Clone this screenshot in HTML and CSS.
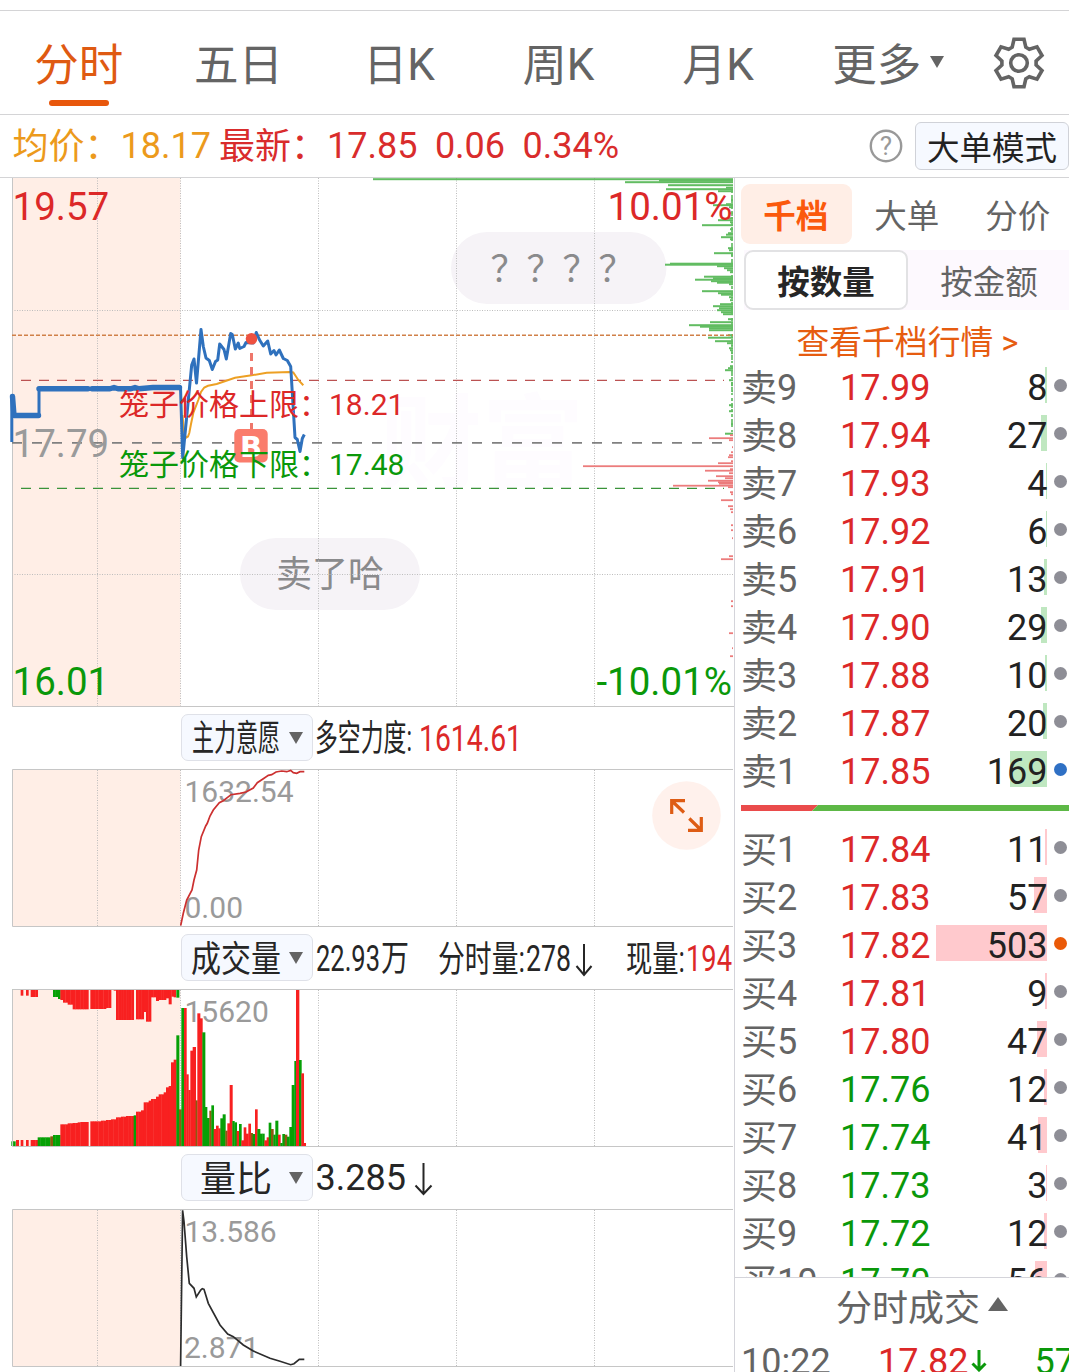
FILE: index.html
```html
<!DOCTYPE html>
<html lang="zh-CN">
  <head>
    <meta charset="utf-8">
    <title>分时</title>
    <link rel="stylesheet" href="styles.css">
  </head>
  <body>

    <nav class="tabs">
      <a class="tab zh active">分时</a>
      <a class="tab zh">五日</a>
      <a class="tab"><span class="cjk">日</span>K</a>
      <a class="tab"><span class="cjk">周</span>K</a>
      <a class="tab"><span class="cjk">月</span>K</a>
      <a class="tab zh more">更多</a>
      <svg class="gear" width="54" height="54" viewBox="-27 -27 54 54">
        <path d="M-5-23.7H5L6.8-15.8L10.3-13.8L18-16.2L23-7.5L17.1-2V2L23 7.5L18 16.2L10.3 13.8L6.8 15.8L5 23.7H-5L-6.8 15.8L-10.3 13.8L-18 16.2L-23 7.5L-17.1 2V-2L-23-7.5L-18-16.2L-10.3-13.8L-6.8-15.8Z"/>
        <circle r="8.3"/>
      </svg>
    </nav>

    <section class="info">
      <span class="avg"><span class="cjk">均价：</span>18.17</span>
      <span class="last"><span class="cjk">最新：</span></span>
      <span class="num">17.85</span>
      <span class="num">0.06</span>
      <span class="num">0.34%</span>
      <svg class="help" width="34" height="34" viewBox="0 0 34 34">
        <circle cx="17" cy="17" r="15.2"/>
        <text x="17" y="26">?</text>
      </svg>
      <a class="mode">大单模式</a>
    </section>

    <main>
      <section class="charts">

        <svg class="chart" width="734" height="529" viewBox="0 178 734 529">
          <text class="watermark" x="380" y="480">财富</text>
          <rect class="pre" x="12" y="178" width="168.5" height="529"/>
          <rect class="pill" x="451" y="232" width="215.5" height="72" rx="36"/>
          <rect class="pill" x="240" y="538" width="180" height="72" rx="36"/>
          <text class="note" x="490.5" y="281.5">？？？？</text>
          <text class="note" x="276" y="587">卖了哈</text>
          <g class="grid">
            <path d="M97.5 178V706M180.5 178V706M318.5 178V706M456.5 178V706M594.5 178V706M12 310.5H733M12 574.5H733"/>
          </g>
          <path class="frame" d="M12.5 178V706.5H734"/>
          <path class="depth-edge" d="M732 190V432"/>
          <g id="depth"></g>
          <path class="high" d="M12 335.2H733"/>
          <path class="upper" d="M21 380.4H724"/>
          <path class="lower" d="M21 488.4H724"/>
          <path class="zero" d="M12 442.9H728"/>
          <text class="up big" x="12.5" y="220">19.57</text>
          <text class="up big end" x="732.5" y="220">10.01%</text>
          <text class="dim big" x="12.5" y="457">17.79</text>
          <text class="down big" x="12.5" y="695">16.01</text>
          <text class="down big end" x="732" y="695">-10.01%</text>
          <path class="avg-line" d="M182.5 415L184 432L186 437.7L188 436.5L189.3 433L191 424L193.3 413L198.3 400L201 392L204.3 387.5L208 385.8L216.7 384L223.3 381.7L235 377.7L251.7 375.3L266.7 372.7L290 372L293.3 372.5L298.3 380L303.3 385.3"/>
          <path class="price thick" d="M12.5 396.5L14 415.5H38.5M39 388.8H88M92 388.8H110L114 387.5L118 388.8H131L135 387.5L139 388.8L153 387.5H179.5"/>
          <path class="price" d="M11.8 442V396M39 415V389M180.5 387L182.7 458L188.3 400L191.7 365L194 359L196.5 383L201 329.5L203.3 346.5L206 358L209.3 360.5L212.3 369.5L215.5 361.5L217.7 360L219.7 344L224 349.5L226.3 359L230.7 333.5L232.3 334.5L235.3 349L238.3 343L239.7 348.5L244 346.5L246 342.5L253.3 343L256.3 332.5L259.3 339.5L263.3 346L267.7 341L270.7 354L274 350.5L276 355L279.3 350L283.3 358.5L287.3 360.5L290.7 366.5L295 437.5L297.3 439.5L300 451.5L302.3 438.5L304.3 434.5"/>
          <path class="buy-line" d="M251.5 353V429"/>
          <circle class="buy-dot" cx="251.5" cy="338.8" r="5.8"/>
          <rect class="buy" x="234.3" y="429" width="33.4" height="33.4" rx="5"/>
          <text class="buy-text" x="251" y="456.5">B</text>
          <text class="up cage" x="119" y="415.3">笼子价格上限：18.21</text>
          <text class="down cage" x="119" y="475.3">笼子价格下限：17.48</text>
        </svg>

        <header class="bar">
          <a class="select">
            <svg width="90" height="44"><text x="1" y="35" textLength="88" lengthAdjust="spacingAndGlyphs">主力意愿</text></svg>
          </a>
          <svg class="reading" width="420" height="44">
            <text x="1" y="35" textLength="97" lengthAdjust="spacingAndGlyphs">多空力度:</text>
            <text class="up" x="105" y="34.5" textLength="103" lengthAdjust="spacingAndGlyphs">1614.61</text>
          </svg>
        </header>
        <svg class="chart" width="734" height="158" viewBox="0 769 734 158">
          <rect class="pre" x="12" y="769" width="168.5" height="157"/>
          <path class="grid" d="M97.5 770V926M180.5 770V926M318.5 770V926M456.5 770V926M594.5 770V926"/>
          <path class="frame" d="M733 769.5H12.5V926.5H733"/>
          <text class="dim" x="184.5" y="801.7">1632.54</text>
          <text class="dim" x="184.5" y="918">0.00</text>
          <path class="force" d="M180.7 925.5L183.3 913.3L186.7 900L192 890L194 880L196.7 870L198.7 850L201.3 836.7L205.7 826L207.3 823.3L210 816L213.3 810L219.3 802.7L223.3 800.7L231 794.7L240 793.3L246 792L253.3 788L257.3 782.7L263.3 778.7L268.3 775.3L271.7 774.7L276 772L281.7 771L286.7 771.7L290.7 770.4L293.3 772.7L296.7 773.3L300 771.7H304.3"/>
          <circle class="expand" cx="686.5" cy="815.5" r="34.3"/>
          <path class="expand-icon" d="M685 800.7H671.7V814M672 801L684 812.5M688 830.3H701.3V817M701 830L689.3 818.5"/>
        </svg>

        <header class="bar">
          <a class="select">
            <svg width="90" height="44"><text x="0" y="35.5" textLength="90" lengthAdjust="spacingAndGlyphs">成交量</text></svg>
          </a>
          <svg class="reading" width="420" height="44">
            <text x="2" y="35" textLength="64" lengthAdjust="spacingAndGlyphs">22.93</text>
            <text x="67" y="35" textLength="28" lengthAdjust="spacingAndGlyphs">万</text>
            <text x="124" y="35.5" textLength="87" lengthAdjust="spacingAndGlyphs">分时量:</text>
            <text x="212" y="35" textLength="45" lengthAdjust="spacingAndGlyphs">278</text>
            <path d="M270 8V38M262.5 30L270 39L277.5 30"/>
            <text x="312" y="35.5" textLength="59" lengthAdjust="spacingAndGlyphs">现量:</text>
            <text class="up" x="372" y="35" textLength="46" lengthAdjust="spacingAndGlyphs">194</text>
          </svg>
        </header>
        <svg class="chart" width="734" height="158" viewBox="0 989 734 158">
          <rect class="pre" x="12" y="989" width="168.5" height="157"/>
          <path class="grid" d="M97.5 990V1146M180.5 990V1146M318.5 990V1146M456.5 990V1146M594.5 990V1146"/>
          <g id="volume"></g>
          <path class="frame" d="M733 989.5H12.5V1146.5H733"/>
          <text class="dim" x="184.5" y="1021.7">15620</text>
        </svg>

        <header class="bar">
          <a class="select">
            <svg width="90" height="44"><text x="9" y="36">量比</text></svg>
          </a>
          <svg class="reading" width="420" height="44">
            <text x="1.5" y="34">3.285</text>
            <path d="M109.5 7V37M101.5 29.5L109.5 38L117.5 29.5"/>
          </svg>
        </header>
        <svg class="chart" width="734" height="163" viewBox="0 1209 734 163">
          <rect class="pre" x="12" y="1209" width="168.5" height="157"/>
          <path class="grid" d="M97.5 1210V1366M180.5 1210V1366M318.5 1210V1366M456.5 1210V1366M594.5 1210V1366"/>
          <path class="frame" d="M733 1209.5H12.5V1366.5H733"/>
          <text class="dim" x="184.5" y="1241.7">13.586</text>
          <text class="dim" x="184" y="1358">2.871</text>
          <path class="ratio" d="M180.6 1366L182.6 1210.3L184 1221.7L186.7 1256.7L189.3 1283.3L194 1288.3L196.3 1297L200.7 1290L202.3 1288.7L204 1289.3L208.3 1303.3L220 1325L227.7 1334L233.3 1336.7L243.3 1345L253.3 1351L270 1358.3L280 1361.3L290.7 1364.7L294 1363.7L299.3 1359.3H304.3"/>
        </svg>

      </section>

      <aside>
        <div class="levels">
          <a class="on">千档</a>
          <a>大单</a>
          <a>分价</a>
        </div>
        <div class="switch">
          <a class="on">按数量</a>
          <a>按金额</a>
        </div>
        <a class="link">查看千档行情 &gt;</a>
        <div class="book" id="asks"></div>
        <svg class="ratio-bar" width="328" height="6" viewBox="0 0 328 6">
          <path d="M0 0H77L71 6H0Z" fill="#ea4b4b"/>
          <path d="M77 0H328V6H71Z" fill="#5db846"/>
        </svg>
        <div class="book bids" id="bids"></div>
        <div class="deals">
          <h2>分时成交</h2>
          <div class="deal">
            <span class="time">10:22</span>
            <span class="up">17.82</span>
            <svg width="16" height="26" viewBox="0 0 16 26"><path d="M8 2V22M1.5 15.5L8 22L14.5 15.5"/></svg>
            <span class="down">57</span>
          </div>
        </div>
      </aside>
    </main>

    <script src="script.js"></script>
  </body>
</html>
```
FILE: styles.css
```css
* { box-sizing: border-box; }

body {
  margin: 0;
  padding-top: 10px;
  width: 1069px;
  height: 1372px;
  overflow: hidden;
  background-color: #fff;
  color: #222;
  font-family: Roboto, 'Noto Sans CJK SC', sans-serif;
  font-size: 36px;
}

svg {
  display: block;
  flex: none;
}

/* cjk glyphs sit a bit high next to the roboto digits */
.cjk {
  line-height: 1;
  vertical-align: -1px;
}

/* top tabs */

.tabs {
  display: flex;
  align-items: center;
  height: 105px;
  border-top: 1px solid #d4d4d6;
  border-bottom: 1px solid #d4d4d6;
}

.tab {
  position: relative;
  width: 159.6px;
  height: 104px;
  padding-top: 4px;
  line-height: 100px;
  text-align: center;
  font-size: 44px;
  color: #646464;
}

.tab.zh {
  padding: 5px 2px 0 0;
  font-size: 44.5px;
}

.tab.active { color: #df5a12; }

.tab.active::after {
  content: '';
  position: absolute;
  left: 49px;
  bottom: 9px;
  width: 60px;
  height: 6px;
  border-radius: 3px;
  background-color: #e8570c;
}

.tab.more::after {
  content: '';
  position: absolute;
  right: 14px;
  top: 45px;
  border: 7.5px solid transparent;
  border-top: 12px solid #646464;
  border-bottom: 0;
}

.gear {
  margin-left: 34px;
  fill: none;
  stroke: #646464;
  stroke-width: 3.6;
}

/* price line */

.info {
  display: flex;
  align-items: center;
  height: 63px;
  padding-left: 12.5px;
  border-bottom: 1px solid #d4d4d6;
  line-height: 64px;
  white-space: nowrap;
}

.avg { color: #ec9a1c; }

.last {
  margin-left: 8px;
  color: #d92c2c;
}

.num {
  margin-right: 17.5px;
  color: #d92c2c;
}

.help {
  margin-left: auto;
  fill: none;
  stroke: #999;
  stroke-width: 2.4;
}

.help text {
  fill: #999;
  stroke: none;
  font-size: 26px;
  text-anchor: middle;
}

.mode {
  width: 154px;
  height: 48px;
  margin-left: 12px;
  border: 1px solid #d0d2d8;
  border-radius: 6px;
  background-color: #f6f9ff;
  line-height: 52px;
  text-align: center;
  font-size: 32.5px;
}

main {
  display: flex;
  height: 1194px;
}

/* charts */

.charts {
  width: 735px;
  border-right: 1px solid #d4d4da;
}

.chart text { font-size: 30px; }

.chart .big { font-size: 38.5px; }

.chart .end { text-anchor: end; }

.chart .note {
  font-size: 36px;
  font-family: 'Noto Sans CJK SC', sans-serif;
  fill: #8a8a8c;
}

.chart .watermark {
  font-size: 102px;
  font-weight: 700;
  fill: #fefcff;
}

.up { fill: #dc2828; color: #dc2828; }

.down { fill: #0a980a; color: #0a980a; }

.dim { fill: #9a9a9a; }

.pre { fill: #ffeee6; }

.pill { fill: #f6f3f7; }

.grid, .frame, .price, .avg-line, .force, .ratio, .high, .upper, .lower, .zero { fill: none; }

.grid {
  stroke: #bdbdbd;
  stroke-dasharray: 1 1.5;
}

.frame { stroke: #c6c6c6; }

.high {
  stroke: #d08048;
  stroke-width: 1.4;
  stroke-dasharray: 4 2;
}

.upper {
  stroke: #bb5252;
  stroke-width: 1.3;
  stroke-dasharray: 10 8;
}

.lower {
  stroke: #3a933a;
  stroke-width: 1.3;
  stroke-dasharray: 10 8;
}

.zero {
  stroke: #808080;
  stroke-width: 1.8;
  stroke-dasharray: 10 10;
}

.price {
  stroke: #2f71bd;
  stroke-width: 3;
  stroke-linejoin: round;
}

.price.thick {
  stroke-width: 5.4;
  stroke-linecap: round;
}

.avg-line {
  stroke: #eda024;
  stroke-width: 2;
}

.buy-line {
  stroke: #ee776b;
  stroke-width: 3;
  stroke-dasharray: 8 6;
}

.buy-dot { fill: #ee5140; }

.buy { fill: #fa7c6c; }

.chart .buy-text {
  font-family: 'DejaVu Sans', sans-serif;
  font-size: 29px;
  font-weight: 700;
  text-anchor: middle;
  fill: #fff;
}

.force {
  stroke: #cc3030;
  stroke-width: 1.7;
}

.ratio {
  stroke: #2c2c2c;
  stroke-width: 1.7;
}

.expand { fill: #fff1ec; }

.expand-icon {
  fill: none;
  stroke: #de5c14;
  stroke-width: 3.2;
}

.depth-edge {
  stroke: #7cc67c;
  stroke-width: 2;
  stroke-dasharray: 3 2 5 1 2 3;
}

#depth .sell { fill: #62bc62; }

#depth .bid { fill: #ec7c7c; }

#volume .r { fill: #f82020; }

#volume .g { fill: #06a006; }

#volume .b { fill: #8c5a10; }

.bar {
  display: flex;
  align-items: flex-start;
  height: 62px;
  padding: 7px 0 0 181px;
}

.bar svg { overflow: visible; }

.select {
  display: flex;
  align-items: center;
  width: 133px;
  height: 47px;
  padding-left: 9px;
  border: 1px solid #dfe1e8;
  border-radius: 7px;
  background-color: #f6f9ff;
}

.select::after {
  content: '';
  margin-left: 8px;
  border: 7.5px solid transparent;
  border-top: 12px solid #646464;
  border-bottom: 0;
}

.reading { margin: 2px 0 0 1px; }

.bar svg text:not(.up) { fill: #262626; }

.reading path {
  fill: none;
  stroke: #262626;
  stroke-width: 2;
}

/* order book */

aside {
  width: 334px;
  height: 1194px;
  padding: 6px 0 0 6px;
  overflow: hidden;
}

.levels {
  display: flex;
  font-size: 32.5px;
}

.levels a {
  flex: none;
  width: 111px;
  height: 60px;
  padding-right: 1.5px;
  border-radius: 9px;
  line-height: 67px;
  text-align: center;
  color: #646464;
  white-space: nowrap;
}

.levels .on {
  background-color: #ffeee6;
  color: #fb590c;
  font-weight: 700;
}

.switch {
  display: flex;
  margin: 6px 0 0 3px;
  background-color: #fdf9fe;
  font-size: 32.5px;
}

.switch a {
  flex: none;
  width: 164px;
  height: 60px;
  padding-right: 2px;
  line-height: 67px;
  text-align: center;
  color: #646464;
}

.switch .on {
  padding-right: 0;
  border: 2px solid #e2e2e4;
  border-radius: 9px;
  background-color: #fff;
  line-height: 63px;
  color: #262626;
  font-weight: 700;
}

.link {
  display: block;
  height: 54px;
  padding-left: 5px;
  line-height: 67px;
  text-align: center;
  font-size: 32.8px;
  color: #e65c10;
}

.row {
  position: relative;
  display: grid;
  grid-template-columns: 99px 100px 1fr 21.5px;
  height: 48px;
  line-height: 48px;
}

.row .name {
  color: #646464;
  white-space: nowrap;
}

.row .qty {
  position: relative;
  text-align: right;
}

.row .fill {
  position: absolute;
  right: 22px;
  top: 3px;
  height: 36px;
  background-color: #bfe7c0;
}

.bids .fill { background-color: #ffc9cd; }

.row .dot {
  width: 13px;
  height: 13px;
  margin: 14.5px 0 0 6.5px;
  border-radius: 50%;
  background-color: #8e8e96;
}

.row .dot.blue { background-color: #2f70c4; }

.row .dot.orange { background-color: #ea5a08; }

.ratio-bar { margin: 9px 0 15px; }

.bids {
  height: 451px;
  overflow: hidden;
}

.deals {
  margin-left: -6px;
  border-top: 1px solid #d4d4da;
}

h2 {
  display: flex;
  align-items: center;
  margin: 0;
  padding-left: 101px;
  height: 62px;
  line-height: 62px;
  font-size: 36px;
  font-weight: 400;
  color: #646464;
}

h2::after {
  content: '';
  margin: -10px 0 0 8px;
  border: 10.5px solid transparent;
  border-bottom: 14px solid #646464;
  border-top: 0;
}

.deal {
  display: flex;
  padding-left: 6px;
  line-height: 44px;
  white-space: nowrap;
}

.deal .time {
  width: 137px;
  flex: none;
  color: #646464;
}

.deal svg {
  margin: 8px 47px 0 3px;
  fill: none;
  stroke: #0a980a;
  stroke-width: 3;
}
```
FILE: script.js
```js
const asks = [
  ['卖9', '17.99', 8], ['卖8', '17.94', 27], ['卖7', '17.93', 4],
  ['卖6', '17.92', 6], ['卖5', '17.91', 13], ['卖4', '17.90', 29],
  ['卖3', '17.88', 10], ['卖2', '17.87', 20], ['卖1', '17.85', 169, 'blue']
]

const bids = [
  ['买1', '17.84', 11], ['买2', '17.83', 57], ['买3', '17.82', 503, 'orange'],
  ['买4', '17.81', 9], ['买5', '17.80', 47], ['买6', '17.76', 12],
  ['买7', '17.74', 41], ['买8', '17.73', 3], ['买9', '17.72', 12],
  ['买10', '17.70', 56]
]

// [y, length]
const sell = [
  [179, 360], [180.5, 74], [182, 108], [185, 65], [187.5, 7], [189, 67], [191, 15],
  [200, 2], [204, 7], [205, 20], [207, 4], [213, 3], [218, 5], [220, 15], [222, 3],
  [225, 31], [229, 3], [233, 5], [234.5, 7], [237, 12], [239, 3], [248, 5], [250, 4],
  [253, 19], [255, 2], [263.5, 63], [264.5, 68], [266, 16], [268, 9], [270, 6],
  [272, 3], [276.5, 29], [278, 20], [279.5, 38], [281, 22], [282.5, 16], [284, 4],
  [291, 31], [293, 15], [294.5, 12], [297, 4], [300, 3], [304, 13], [306, 20],
  [308, 14], [310, 16], [312, 12], [314, 10], [319, 5], [322, 23], [325, 44],
  [326.5, 33], [328, 24], [330, 24], [335, 5], [337.5, 25], [341, 18], [343, 6],
  [345, 2], [348, 4], [350, 3], [353, 2], [366, 3], [368, 5], [370, 8], [380, 4],
  [383, 2], [385, 2], [391, 1], [405, 4], [411, 4], [424, 2], [433.5, 8]
]

const buy = [
  [435, 3], [438, 24], [440, 4], [447, 1], [452, 2], [455, 4], [457, 5], [461, 2],
  [463, 15], [466, 150], [469, 3], [470.5, 28], [473, 4], [476, 17], [478, 8],
  [480.5, 25], [482, 15], [483.5, 14], [485.5, 60], [487, 5], [492, 3], [494, 2],
  [500, 12], [506, 5], [509, 3], [512, 2], [525, 2], [530, 2], [538, 1], [556, 4],
  [559, 12], [601, 2], [606, 2], [633, 4], [648, 1], [656, 3]
]

// [left, right, top, colour], in thirds of a pixel
const volume = [
  [34, 46, 484, 'g'], [48, 56, 480, 'r'], [62, 69, 480, 'r'], [78, 85, 480, 'r'],
  [92, 113, 480, 'r'], [113, 151, 472, 'g'], [151, 159, 469, 'b'], [159, 181, 465, 'g'],
  [181, 203, 433, 'r'], [203, 218, 430, 'r'], [218, 233, 429, 'r'], [233, 241, 427, 'r'],
  [241, 265, 426, 'r'], [271, 303, 424, 'r'], [303, 318, 422, 'r'], [318, 333, 420, 'r'],
  [333, 348, 418, 'r'], [348, 363, 412, 'r'], [363, 378, 410, 'r'], [378, 401, 408, 'r'],
  [401, 408, 406, 'g'], [408, 423, 395, 'r'], [423, 431, 391, 'r'], [431, 446, 367, 'r'],
  [446, 453, 362, 'r'], [453, 468, 357, 'r'], [468, 476, 350, 'r'], [476, 491, 343, 'r'],
  [491, 498, 337, 'r'], [498, 506, 322, 'r'], [506, 513, 318, 'r'], [513, 521, 247, 'r'],
  [521, 529, 239, 'r'], [529, 537, 166, 'g'], [537, 544, 388, 'b'], [544, 552, 84, 'g'],
  [552, 559, 84, 'r'], [559, 565, 283, 'r'], [565, 571, 330, 'r'], [571, 578, 212, 'r'],
  [578, 587, 201, 'r'], [587, 592, 361, 'b'], [592, 600, 100, 'r'], [600, 607, 115, 'r'],
  [607, 615, 157, 'g'], [615, 621, 381, 'g'], [621, 628, 414, 'g'], [628, 634, 392, 'b'],
  [634, 641, 376, 'g'], [641, 648, 447, 'r'], [648, 655, 437, 'r'], [655, 661, 445, 'r'],
  [661, 668, 415, 'g'], [668, 676, 403, 'g'], [676, 682, 452, 'b'], [682, 689, 430, 'r'],
  [689, 697, 315, 'r'], [697, 703, 423, 'g'], [703, 710, 427, 'g'], [710, 717, 453, 'r'],
  [717, 724, 432, 'g'], [724, 731, 481, 'r'], [731, 738, 442, 'r'], [738, 745, 461, 'r'],
  [745, 752, 431, 'r'], [752, 758, 459, 'b'], [758, 765, 462, 'g'], [765, 772, 388, 'r'],
  [772, 780, 447, 'g'], [780, 787, 461, 'g'], [787, 793, 461, 'g'], [793, 800, 481, 'r'],
  [800, 806, 472, 'r'], [806, 813, 428, 'g'], [813, 820, 447, 'b'], [820, 826, 464, 'g'],
  [826, 834, 422, 'g'], [834, 841, 464, 'r'], [841, 847, 489, 'g'], [847, 854, 462, 'g'],
  [854, 861, 464, 'b'], [861, 868, 470, 'g'], [868, 875, 441, 'g'], [875, 883, 315, 'g'],
  [883, 888, 243, 'g'], [888, 897, 30, 'r'], [897, 904, 240, 'g'], [904, 911, 280, 'r'],
  [911, 917, 489, 'r']
]

// same, hanging from the top: third value is the bottom
const unmatched = [
  [38, 48, 30, 'g'], [62, 69, 47, 'r'], [78, 85, 47, 'r'], [92, 113, 51, 'r'],
  [151, 159, 30, 'g'], [159, 174, 51, 'g'], [174, 181, 57, 'g'], [181, 189, 60, 'r'],
  [189, 203, 68, 'r'], [203, 218, 74, 'r'], [218, 265, 88, 'r'], [271, 318, 87, 'r'],
  [318, 333, 84, 'r'], [341, 348, 32, 'r'], [348, 401, 120, 'r'], [408, 431, 118, 'r'],
  [431, 438, 96, 'r'], [438, 453, 125, 'r'], [453, 468, 52, 'r'], [468, 476, 63, 'r'],
  [476, 498, 60, 'r'], [498, 506, 55, 'r'], [506, 514, 73, 'r'], [514, 521, 50, 'r'],
  [521, 527, 52, 'r'], [529, 537, 53, 'g']
]

function rows (list) {
  return list.map(([name, price, qty, dot]) => `
    <div class="row">
      <i class="fill" style="width:${(qty * 0.221).toFixed(1)}px"></i>
      <span class="name"><span class="cjk">${name[0]}</span>${name.slice(1)}</span>
      <span class="${price > 17.79 ? 'up' : 'down'}">${price}</span>
      <span class="qty">${qty}</span>
      <i class="dot ${dot || ''}"></i>
    </div>`).join('')
}

function rect (cls, x, y, w, h) {
  return `<rect class="${cls}" x="${x}" y="${y}" width="${w}" height="${h}"/>`
}

// one bar a minute, so wide runs are cut into single bars
function bars (list, y, height) {
  return list.map(([left, right, edge, cls]) => {
    const n = Math.max(1, Math.round((right - left) / 7.5))
    const w = (right - left) / 3 / n
    let out = ''
    for (let i = 0; i < n; i++) out += rect(cls, left / 3 + i * w, y(edge), w + 0.35, height(edge))
    return out
  }).join('')
}

document.querySelector('#asks').innerHTML = rows(asks)
document.querySelector('#bids').innerHTML = rows(bids)

document.querySelector('#depth').innerHTML =
  sell.map(([y, w]) => rect('sell', 733 - w, y - 0.8, w, 2)).join('') +
  buy.map(([y, w]) => rect('bid', 733 - w, y - 0.7, w, 1.8)).join('')

document.querySelector('#volume').innerHTML =
  bars(volume, e => 980 + e / 3, e => 166 - e / 3) +
  bars(unmatched, () => 989, e => e / 3 - 9)
```
